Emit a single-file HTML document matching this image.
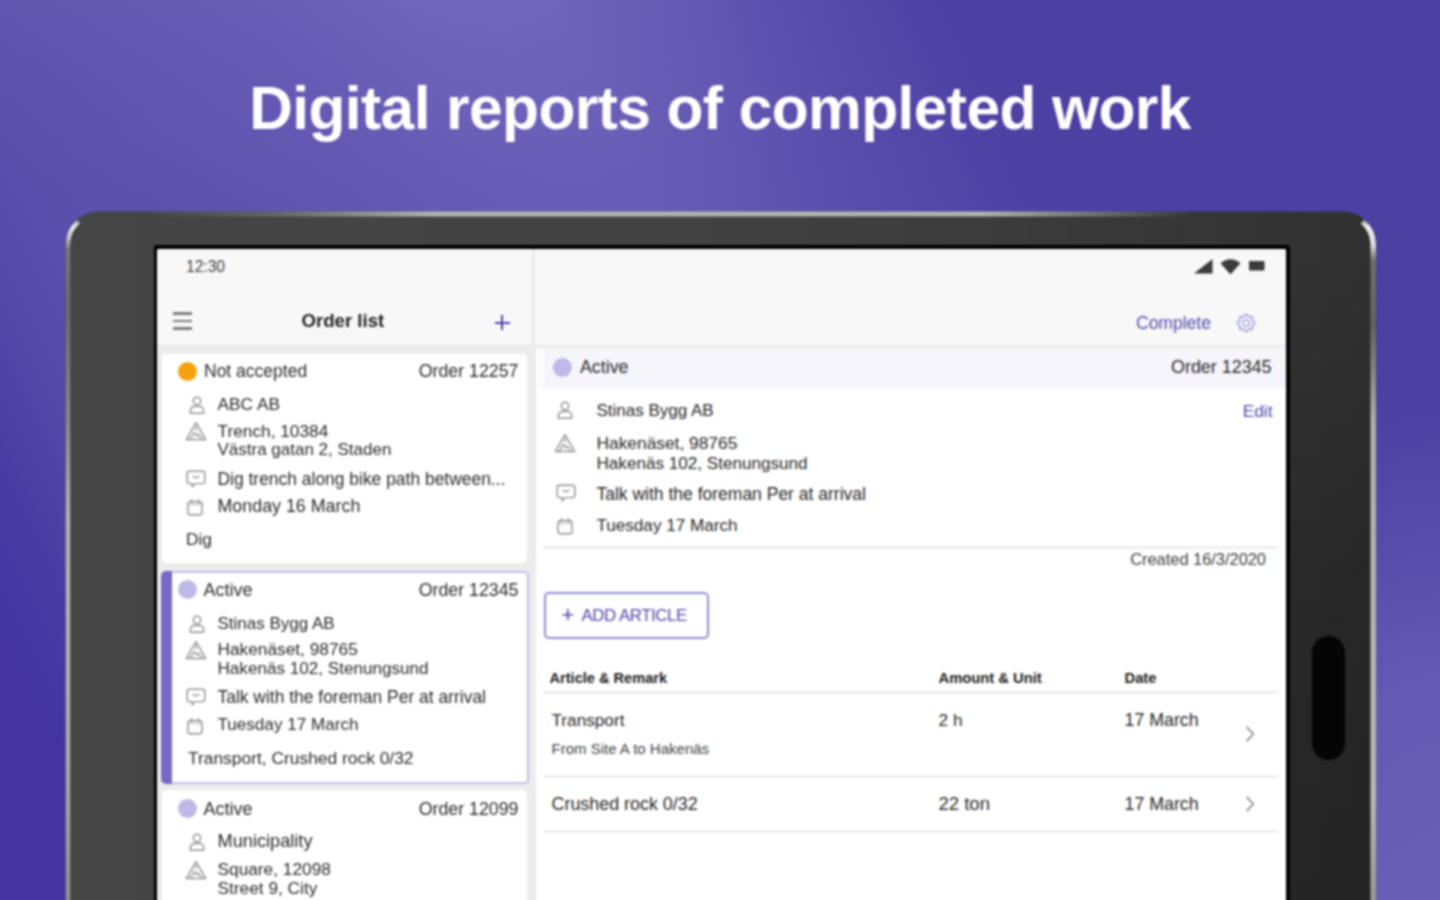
<!DOCTYPE html>
<html lang="en">
<head>
<meta charset="utf-8">
<title>Digital reports of completed work</title>
<style>
*{box-sizing:border-box;margin:0;padding:0}
html,body{width:1440px;height:900px;overflow:hidden}
body{position:relative;font-family:"Liberation Sans",sans-serif;color:#2a2a2a;
background:radial-gradient(ellipse 400px 700px at 1440px 960px,rgba(108,96,183,.97) 0%,rgba(108,96,183,.94) 9%,rgba(108,96,183,.78) 40%,rgba(108,96,183,.47) 56%,rgba(108,96,183,.12) 73%,rgba(108,96,183,0) 81%),linear-gradient(180deg,rgba(76,64,163,0) 0px,rgba(76,64,163,.25) 200px,rgba(76,64,163,.25) 100%),linear-gradient(63.4deg,#42309f 0%,#42309f 7.5%,#4838a3 11%,#4f42a6 13.5%,#5e52ae 19.6%,#6156ae 24%,#685db5 36.8%,#7065bb 45.5%,#7166bc 49.5%,#7065bb 53%,#685db5 58%,#5f54b0 62.5%,#554aa9 68%,#4e42a5 72.5%,#4c40a3 76%,#4c40a3 100%)}
.abs{position:absolute}
h1{position:absolute;left:0;width:1440px;top:72.9px;text-align:center;font-size:60.5px;line-height:70px;font-weight:bold;color:#fff;white-space:nowrap;letter-spacing:-.6px}
/* tablet */
.cam{position:absolute;left:1312px;top:636px;width:33px;height:124px;border-radius:17px;background:#050505}
.screen-b{position:absolute;left:153.5px;top:244.5px;width:1136.5px;height:700px;background:#000;border-radius:3px}
.screen{position:absolute;left:157px;top:248.5px;width:1129px;height:700px;background:#fff;overflow:hidden;border-radius:2px}
/* all coords inside .screen are page coords minus (157,248.5) -> use wrapper shifted */
.pg{position:absolute;left:-157px;top:-248.5px;width:1440px;height:900px}
.t{position:absolute;white-space:nowrap;line-height:20px;height:20px;font-size:17.3px;color:#2b2b2b}
.r{text-align:right}
.b{font-weight:bold}
.p{color:#574fae}
.dot{position:absolute;width:19px;height:19px;border-radius:50%}
.card{position:absolute;left:162px;width:364.5px;background:#fff;border-radius:4px}
.ic{position:absolute;overflow:visible}
.ic *{fill:none;stroke:#929292;stroke-width:1.45;stroke-linecap:round;stroke-linejoin:round}
.hr{position:absolute;height:3px;background:#eeeeee}
body>*{filter:blur(1px)}
</style>
</head>
<body>
<h1>Digital reports of completed work</h1>

<svg class="abs" style="left:0;top:0" width="1440" height="930" viewBox="0 0 1440 930">
<defs>
<linearGradient id="fg" gradientUnits="userSpaceOnUse" x1="66" y1="0" x2="1376" y2="0"><stop offset="0" stop-color="#454545"/><stop offset=".45" stop-color="#434343"/><stop offset=".7" stop-color="#3c3c3c"/><stop offset=".9" stop-color="#353535"/><stop offset="1" stop-color="#313131"/></linearGradient>
<linearGradient id="tg" gradientUnits="userSpaceOnUse" x1="150" y1="0" x2="1190" y2="0"><stop offset="0" stop-color="#b4b4b4" stop-opacity="0"/><stop offset=".12" stop-color="#b4b4b4" stop-opacity=".3"/><stop offset=".27" stop-color="#b4b4b4" stop-opacity="1"/><stop offset=".8" stop-color="#b4b4b4" stop-opacity="1"/><stop offset="1" stop-color="#b4b4b4" stop-opacity="0"/></linearGradient>
<linearGradient id="lg" gradientUnits="userSpaceOnUse" x1="0" y1="218" x2="0" y2="900"><stop offset="0" stop-color="#7a7a7a"/><stop offset=".012" stop-color="#ececec"/><stop offset=".028" stop-color="#c4c4c4"/><stop offset=".046" stop-color="#787878"/><stop offset=".13" stop-color="#6a6a6a"/><stop offset=".3" stop-color="#8a8a8a"/><stop offset=".44" stop-color="#b3b5b1"/><stop offset=".7" stop-color="#b0b2ae"/><stop offset=".87" stop-color="#a4a4a2"/><stop offset="1" stop-color="#909090"/></linearGradient>
<linearGradient id="rg" gradientUnits="userSpaceOnUse" x1="0" y1="218" x2="0" y2="900"><stop offset="0" stop-color="#6a6a6a"/><stop offset=".012" stop-color="#f0f0f0"/><stop offset=".04" stop-color="#dcdcdc"/><stop offset=".062" stop-color="#707070"/><stop offset=".16" stop-color="#626262"/><stop offset=".3" stop-color="#b0b2ad"/><stop offset=".85" stop-color="#b8bab4"/><stop offset="1" stop-color="#9a9a98"/></linearGradient>
<linearGradient id="vd" gradientUnits="userSpaceOnUse" x1="0" y1="245" x2="0" y2="900"><stop offset="0" stop-color="#000" stop-opacity="0"/><stop offset=".5" stop-color="#000" stop-opacity=".2"/><stop offset="1" stop-color="#000" stop-opacity=".27"/></linearGradient>
</defs>
<rect x="65.5" y="211.5" width="1310.5" height="760" rx="33" fill="url(#fg)"/>
<rect x="1286" y="245" width="90" height="690" fill="url(#vd)"/>
<rect x="150" y="211.5" width="1040" height="5" fill="url(#tg)"/>
<path d="M68 935 L68 244.5 A30.5 30.5 0 0 1 78.5 221.5" fill="none" stroke="url(#lg)" stroke-width="4.5"/>
<path d="M1373.2 935 L1373.2 244.5 A30.5 30.5 0 0 0 1362.5 221.5" fill="none" stroke="url(#rg)" stroke-width="5.5"/>
</svg>
<div class="cam"></div>
<div class="screen-b"></div>
<div class="screen"><div class="pg">

<!-- backgrounds -->
<div class="abs" style="left:157px;top:248px;width:1130px;height:98.5px;background:#f8f8f9"></div>
<div class="abs" style="left:157px;top:345px;width:378.5px;height:600px;background:#ececec"></div>
<div class="abs" style="left:157px;top:345px;width:1130px;height:2.5px;background:#ebebeb"></div>
<div class="abs" style="left:532.2px;top:248px;width:2.6px;height:98px;background:#ebebeb"></div>
<div class="abs" style="left:539px;top:347.5px;width:747px;height:40px;background:linear-gradient(90deg,#fbfbfe 0,#f6f5fc 8px)"></div>

<!-- status bar -->
<div class="t" style="left:186px;top:256.5px;font-size:15.6px;color:#444">12:30</div>
<svg class="abs" style="left:1192px;top:257px" width="76" height="19" viewBox="0 0 76 19">
<path d="M2 16.5 L20.5 16.5 L20.5 2 Z" fill="#3b3b3b"/>
<path d="M28.5 6.2 Q38.5 -1.5 48.5 6.2 L38.5 17.5 Z" fill="#3b3b3b"/>
<rect x="57" y="4" width="15.5" height="9.5" rx="1.2" fill="#3b3b3b"/>
</svg>

<!-- left header -->
<div class="abs" style="left:172.5px;top:312.4px;width:19.5px;height:2.3px;background:#7c7c7c"></div>
<div class="abs" style="left:172.5px;top:319.9px;width:19.5px;height:2.3px;background:#7c7c7c"></div>
<div class="abs" style="left:172.5px;top:327.4px;width:19.5px;height:2.3px;background:#7c7c7c"></div>
<div class="t b" style="left:301.5px;top:310.5px;font-size:18.6px;color:#222">Order list</div>
<div class="abs" style="left:494.5px;top:321.5px;width:15px;height:2px;background:#4d43ad"></div>
<div class="abs" style="left:501px;top:315px;width:2px;height:15px;background:#4d43ad"></div>

<!-- card 1 -->
<div class="card" style="top:353.5px;height:209.5px"></div>
<div class="dot" style="left:178px;top:362px;background:#f5a110"></div>
<div class="t" style="left:204px;top:361px;font-size:17.5px">Not accepted</div>
<div class="t r" style="left:318.5px;width:200px;top:361px;font-size:17.8px">Order 12257</div>
<div class="t" style="left:217.5px;top:393.5px">ABC AB</div>
<div class="t" style="left:217.5px;top:421px">Trench, 10384</div>
<div class="t" style="left:217.5px;top:440px;font-size:17px">Västra gatan 2, Staden</div>
<div class="t" style="left:217.5px;top:469px;font-size:17.45px">Dig trench along bike path between...</div>
<div class="t" style="left:217.5px;top:496.3px;font-size:17.85px">Monday 16 March</div>
<div class="t" style="left:186px;top:529px">Dig</div>

<!-- card 2 (selected) -->
<div class="card" style="top:571px;height:213px;width:367px;border:2px solid #c3bdea;border-left:none;border-radius:5px"></div>
<div class="abs" style="left:161px;top:571px;width:10.5px;height:213px;background:#7469c4;border-radius:5px 0 0 5px"></div>
<div class="dot" style="left:178px;top:580px;background:#bfb9e7"></div>
<div class="t" style="left:203.5px;top:579.5px;font-size:18px">Active</div>
<div class="t r" style="left:318.5px;width:200px;top:579.5px;font-size:17.8px">Order 12345</div>
<div class="t" style="left:217.5px;top:613.7px;font-size:17px">Stinas Bygg AB</div>
<div class="t" style="left:217.5px;top:639px">Hakenäset, 98765</div>
<div class="t" style="left:217.5px;top:659.4px;font-size:17.1px">Hakenäs 102, Stenungsund</div>
<div class="t" style="left:217.5px;top:687px;font-size:17.45px">Talk with the foreman Per at arrival</div>
<div class="t" style="left:217.5px;top:715px;font-size:17.1px">Tuesday 17 March</div>
<div class="t" style="left:188px;top:748px;font-size:17.4px">Transport, Crushed rock 0/32</div>

<!-- card 3 -->
<div class="card" style="top:790px;height:160px"></div>
<div class="dot" style="left:178px;top:799px;background:#bfb9e7"></div>
<div class="t" style="left:203.5px;top:798.5px;font-size:18px">Active</div>
<div class="t r" style="left:318.5px;width:200px;top:798.5px;font-size:17.8px">Order 12099</div>
<div class="t" style="left:217.5px;top:830.5px;font-size:18.2px">Municipality</div>
<div class="t" style="left:217.5px;top:859px">Square, 12098</div>
<div class="t" style="left:217.5px;top:878px">Street 9, City</div>

<!-- right header -->
<div class="t p" style="left:1136px;top:312.5px;font-size:17.5px;color:#5c54ae">Complete</div>

<!-- right: order head -->
<div class="dot" style="left:552.5px;top:358px;background:#bfb9e7"></div>
<div class="t" style="left:580px;top:357px;font-size:17.8px">Active</div>
<div class="t r" style="left:1071.5px;width:200px;top:357px;font-size:17.9px">Order 12345</div>
<div class="t" style="left:596.5px;top:401px;font-size:17px">Stinas Bygg AB</div>
<div class="t r p" style="left:1172.5px;width:100px;top:401px;font-size:17.3px">Edit</div>
<div class="t" style="left:596.5px;top:432.5px;font-size:17.35px">Hakenäset, 98765</div>
<div class="t" style="left:596.5px;top:453.5px;font-size:17.1px">Hakenäs 102, Stenungsund</div>
<div class="t" style="left:596.5px;top:483.5px;font-size:17.5px">Talk with the foreman Per at arrival</div>
<div class="t" style="left:596.5px;top:516px;font-size:17.1px">Tuesday 17 March</div>
<div class="hr" style="left:544px;top:546px;width:733px"></div>
<div class="t r" style="left:1066px;width:200px;top:549px;font-size:16.4px;color:#444">Created 16/3/2020</div>

<!-- add article -->
<div class="abs" style="left:544px;top:592px;width:165px;height:46.5px;border:2px solid #928bd6;border-radius:5px;background:#fff"></div>
<div class="t p" style="left:561.6px;top:604.6px;font-size:21.5px;color:#5249b0">+</div><div class="t p" style="left:581.5px;top:605.5px;font-size:16.6px;letter-spacing:-.3px;color:#5249b0">ADD ARTICLE</div>

<!-- table -->
<div class="t b" style="left:549.5px;top:668px;font-size:14.6px;color:#222">Article &amp; Remark</div>
<div class="t b" style="left:938.5px;top:668px;font-size:14.75px;color:#222">Amount &amp; Unit</div>
<div class="t b" style="left:1124.5px;top:668px;font-size:14.75px;color:#222">Date</div>
<div class="hr" style="left:544px;top:691.3px;width:733px"></div>
<div class="t" style="left:551.5px;top:709.5px;font-size:17.2px">Transport</div>
<div class="t" style="left:551.5px;top:739px;font-size:15px;color:#444">From Site A to Hakenäs</div>
<div class="t" style="left:938.5px;top:709.5px">2 h</div>
<div class="t" style="left:1124.5px;top:709.5px;font-size:17.8px">17 March</div>
<div class="hr" style="left:544px;top:774.7px;width:733px"></div>
<div class="t" style="left:551.5px;top:793.5px;font-size:17.9px">Crushed rock 0/32</div>
<div class="t" style="left:938.5px;top:793.5px;font-size:18.5px">22 ton</div>
<div class="t" style="left:1124.5px;top:793.5px;font-size:17.8px">17 March</div>
<div class="hr" style="left:544px;top:829.7px;width:733px"></div>

<!-- icons -->
<svg class="ic" style="left:186.5px;top:395px" width="20" height="20" viewBox="0 0 20 20"><circle cx="10" cy="6" r="3.7"/><path d="M3.4 18.2v-2.8a3.9 3.9 0 0 1 3.9-3.9h5.4a3.9 3.9 0 0 1 3.9 3.9v2.8z"/></svg>
<svg class="ic" style="left:184.8px;top:421px" width="22" height="20" viewBox="0 0 22 20"><path d="M11 1.6L20.6 18.4H1.4z"/><path d="M5.2 18.2L9.4 11.4l2.4 3.6 1.6-2 3.4 5.2" style="stroke-width:1.3"/><path d="M11 5.6v3.2" style="stroke-width:1.3"/></svg>
<svg class="ic" style="left:185.7px;top:468.5px" width="20" height="20" viewBox="0 0 20 20"><path d="M3.6 2.2h12.8a2.4 2.4 0 0 1 2.4 2.4v7.6a2.4 2.4 0 0 1-2.4 2.4H9.2l-3 3.2v-3.2H3.6a2.4 2.4 0 0 1-2.4-2.4V4.6a2.4 2.4 0 0 1 2.4-2.4z"/><path d="M7 7.2q3 3 6 0" style="stroke-width:1.3"/></svg>
<svg class="ic" style="left:185px;top:497px" width="20" height="20" viewBox="0 0 20 20"><rect x="3" y="4.8" width="14" height="13" rx="2.4"/><path d="M6.6 2.6v3.2M13.4 2.6v3.2"/><path d="M3.4 7.6h13.2" style="stroke-width:1;stroke:#b8b8b8"/></svg>
<svg class="ic" style="left:186.5px;top:614px" width="20" height="20" viewBox="0 0 20 20"><circle cx="10" cy="6" r="3.7"/><path d="M3.4 18.2v-2.8a3.9 3.9 0 0 1 3.9-3.9h5.4a3.9 3.9 0 0 1 3.9 3.9v2.8z"/></svg>
<svg class="ic" style="left:184.8px;top:640px" width="22" height="20" viewBox="0 0 22 20"><path d="M11 1.6L20.6 18.4H1.4z"/><path d="M5.2 18.2L9.4 11.4l2.4 3.6 1.6-2 3.4 5.2" style="stroke-width:1.3"/><path d="M11 5.6v3.2" style="stroke-width:1.3"/></svg>
<svg class="ic" style="left:185.7px;top:686.5px" width="20" height="20" viewBox="0 0 20 20"><path d="M3.6 2.2h12.8a2.4 2.4 0 0 1 2.4 2.4v7.6a2.4 2.4 0 0 1-2.4 2.4H9.2l-3 3.2v-3.2H3.6a2.4 2.4 0 0 1-2.4-2.4V4.6a2.4 2.4 0 0 1 2.4-2.4z"/><path d="M7 7.2q3 3 6 0" style="stroke-width:1.3"/></svg>
<svg class="ic" style="left:185px;top:715.5px" width="20" height="20" viewBox="0 0 20 20"><rect x="3" y="4.8" width="14" height="13" rx="2.4"/><path d="M6.6 2.6v3.2M13.4 2.6v3.2"/><path d="M3.4 7.6h13.2" style="stroke-width:1;stroke:#b8b8b8"/></svg>
<svg class="ic" style="left:186.5px;top:832px" width="20" height="20" viewBox="0 0 20 20"><circle cx="10" cy="6" r="3.7"/><path d="M3.4 18.2v-2.8a3.9 3.9 0 0 1 3.9-3.9h5.4a3.9 3.9 0 0 1 3.9 3.9v2.8z"/></svg>
<svg class="ic" style="left:184.8px;top:859.7px" width="22" height="20" viewBox="0 0 22 20"><path d="M11 1.6L20.6 18.4H1.4z"/><path d="M5.2 18.2L9.4 11.4l2.4 3.6 1.6-2 3.4 5.2" style="stroke-width:1.3"/><path d="M11 5.6v3.2" style="stroke-width:1.3"/></svg>
<svg class="ic" style="left:554.5px;top:400px" width="20" height="20" viewBox="0 0 20 20"><circle cx="10" cy="6" r="3.7"/><path d="M3.4 18.2v-2.8a3.9 3.9 0 0 1 3.9-3.9h5.4a3.9 3.9 0 0 1 3.9 3.9v2.8z"/></svg>
<svg class="ic" style="left:553.5px;top:433px" width="22" height="20" viewBox="0 0 22 20"><path d="M11 1.6L20.6 18.4H1.4z"/><path d="M5.2 18.2L9.4 11.4l2.4 3.6 1.6-2 3.4 5.2" style="stroke-width:1.3"/><path d="M11 5.6v3.2" style="stroke-width:1.3"/></svg>
<svg class="ic" style="left:555.5px;top:483px" width="20" height="20" viewBox="0 0 20 20"><path d="M3.6 2.2h12.8a2.4 2.4 0 0 1 2.4 2.4v7.6a2.4 2.4 0 0 1-2.4 2.4H9.2l-3 3.2v-3.2H3.6a2.4 2.4 0 0 1-2.4-2.4V4.6a2.4 2.4 0 0 1 2.4-2.4z"/><path d="M7 7.2q3 3 6 0" style="stroke-width:1.3"/></svg>
<svg class="ic" style="left:555px;top:515.7px" width="20" height="20" viewBox="0 0 20 20"><rect x="3" y="4.8" width="14" height="13" rx="2.4"/><path d="M6.6 2.6v3.2M13.4 2.6v3.2"/><path d="M3.4 7.6h13.2" style="stroke-width:1;stroke:#b8b8b8"/></svg>
<svg class="ic" style="left:1244px;top:725px" width="12" height="18" viewBox="0 0 12 18"><path d="M3 2.4L9.4 9 3 15.6" style="stroke-width:1.7;stroke:#8a8a8a"/></svg>
<svg class="ic" style="left:1244px;top:795px" width="12" height="18" viewBox="0 0 12 18"><path d="M3 2.4L9.4 9 3 15.6" style="stroke-width:1.7;stroke:#8a8a8a"/></svg>
<svg class="ic" style="left:1235.5px;top:312.6px" width="20" height="20" viewBox="0 0 20 20"><path d="M16.81 8.37 L18.42 8.87 L18.42 11.13 L16.81 11.63 L15.97 13.66 L16.76 15.16 L15.16 16.76 L13.66 15.97 L11.63 16.81 L11.13 18.42 L8.87 18.42 L8.37 16.81 L6.34 15.97 L4.84 16.76 L3.24 15.16 L4.03 13.66 L3.19 11.63 L1.58 11.13 L1.58 8.87 L3.19 8.37 L4.03 6.34 L3.24 4.84 L4.84 3.24 L6.34 4.03 L8.37 3.19 L8.87 1.58 L11.13 1.58 L11.63 3.19 L13.66 4.03 L15.16 3.24 L16.76 4.84 L15.97 6.34Z" style="stroke:#a6a0dc;stroke-width:1.5"/><circle cx="10" cy="10" r="3.2" style="stroke:#a6a0dc;stroke-width:1.4"/></svg>
</div></div>
</body>
</html>
